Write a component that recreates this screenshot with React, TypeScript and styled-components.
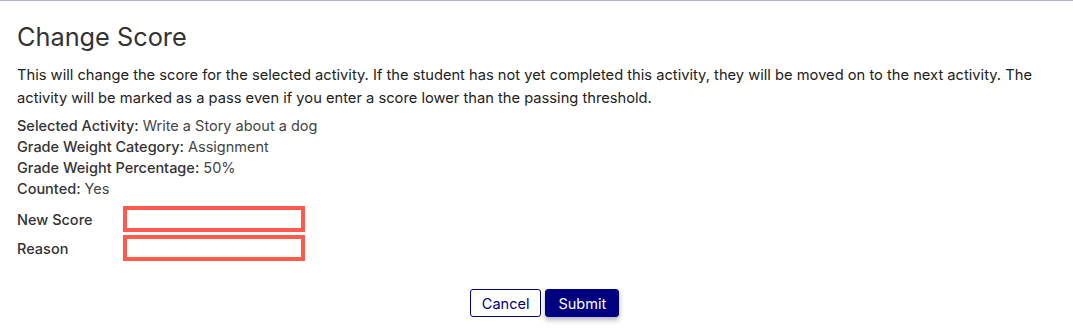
import React from "react";
import styled, { createGlobalStyle } from "styled-components";

const Global = createGlobalStyle`
  html, body {
    margin: 0;
    padding: 0;
    background: #ffffff;
  }
  body {
    font-family: Inter, "Noto Sans", "Liberation Sans", sans-serif;
    color: #333333;
  }
  * {
    box-sizing: border-box;
  }
`;

const Modal = styled.div`
  width: 1073px;
  height: 329px;
  border-top: 1px solid #b4b4c4;
  padding: 0 17px;
  background: #ffffff;
  overflow: hidden;
`;

const Title = styled.h2`
  margin: 21px 0 0 0;
  font-size: 25.3px;
  line-height: 29px;
  font-weight: 400;
  color: #333333;
`;

const Intro = styled.p`
  margin: 13px 0 0 0;
  font-size: 14.7px;
  line-height: 23px;
  color: #222222;
`;

const Info = styled.div`
  margin-top: 5px;
  display: flex;
  flex-direction: column;
`;

const InfoRow = styled.div`
  font-size: 14.5px;
  line-height: 21px;
  color: #444444;
`;

const Key = styled.span`
  font-weight: 500;
  color: #333333;
`;

const Form = styled.div`
  margin-top: 7px;
  display: flex;
  flex-direction: column;
  gap: 3px;
`;

const FieldRow = styled.label`
  display: grid;
  grid-template-columns: 106px 182px;
  align-items: center;
  font-size: 14.5px;
  font-weight: 500;
  color: #333333;
`;

const Field = styled.input`
  display: block;
  height: 26px;
  min-height: 26px;
  width: 182px;
  margin: 0;
  border: 4px solid #ff5a4e;
  border-radius: 0;
  outline: none;
  padding: 0 4px;
  font-family: inherit;
  font-size: 14px;
  background: #ffffff;
`;

const Footer = styled.div`
  margin-top: 28px;
  display: flex;
  justify-content: center;
  gap: 4px;
  padding-left: 16px;
`;

interface ButtonProps {
  $primary?: boolean;
}

const Button = styled.button<ButtonProps>`
  height: 28px;
  padding: 0 ${(p) => (p.$primary ? "12px" : "11px")};
  border-radius: 3px;
  border: 1px solid #000080;
  font-family: inherit;
  font-size: 14.5px;
  cursor: pointer;
  background: ${(p) => (p.$primary ? "#000080" : "#ffffff")};
  color: ${(p) => (p.$primary ? "#ffffff" : "#000080")};
  box-shadow: ${(p) => (p.$primary ? "0 3px 5px rgba(0, 0, 40, 0.3)" : "none")};
`;

const info = [
  { key: "Selected Activity", value: "Write a Story about a dog" },
  { key: "Grade Weight Category", value: "Assignment" },
  { key: "Grade Weight Percentage", value: "50%" },
  { key: "Counted", value: "Yes" },
];

const App = () => {
  return (
    <>
      <Global />
      <Modal>
        <Title>Change Score</Title>
        <Intro>
          This will change the score for the selected activity. If the student
          has not yet completed this activity, they will be moved on to the
          next activity. The activity will be marked as a pass even if you
          enter a score lower than the passing threshold.
        </Intro>
        <Info>
          {info.map((i) => (
            <InfoRow key={i.key}>
              <Key>{i.key}:</Key> {i.value}
            </InfoRow>
          ))}
        </Info>
        <Form>
          <FieldRow>
            New Score
            <Field type="text" />
          </FieldRow>
          <FieldRow>
            Reason
            <Field type="text" />
          </FieldRow>
        </Form>
        <Footer>
          <Button>Cancel</Button>
          <Button $primary>Submit</Button>
        </Footer>
      </Modal>
    </>
  );
};

export default App;
